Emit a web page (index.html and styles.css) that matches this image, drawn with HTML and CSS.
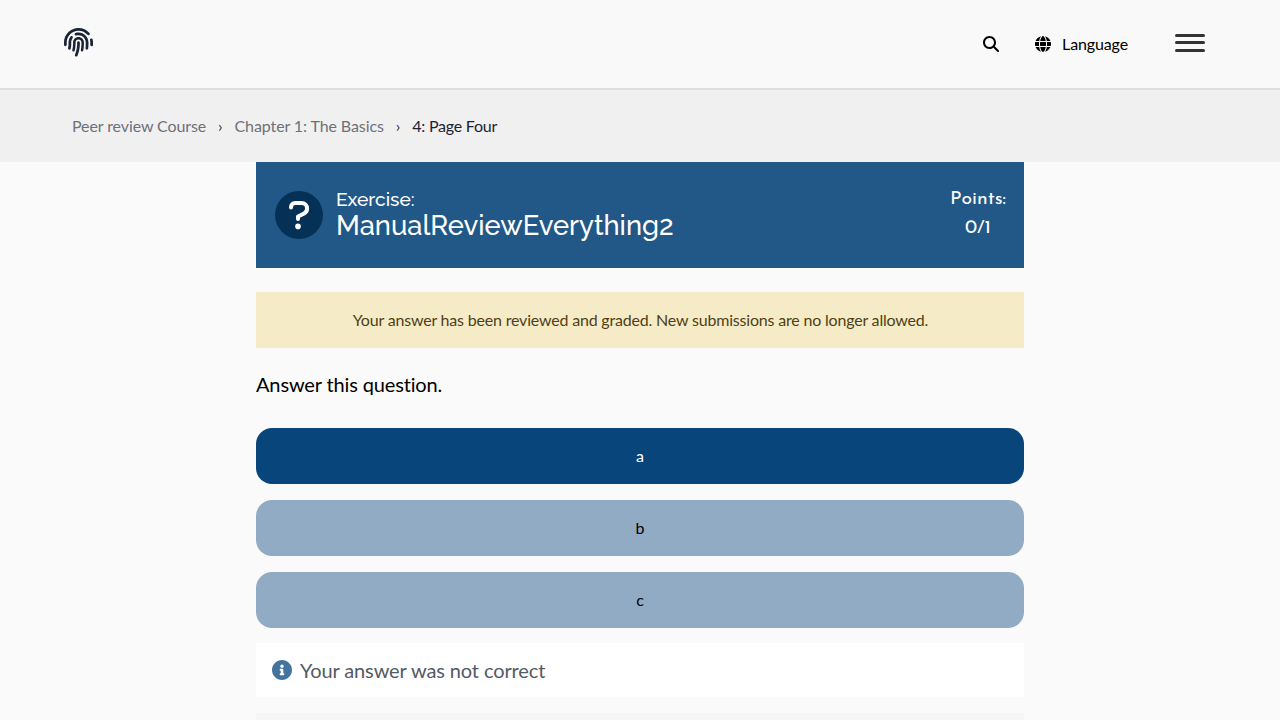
FILE: index.html
```html
<!DOCTYPE html>
<html lang="en">
<head>
<meta charset="utf-8">
<title>Page Four</title>
<link rel="stylesheet" href="styles.css">
</head>
<body>
<header class="topbar">
  <a class="logo"><svg viewBox="0 0 512 512" fill="currentColor"><path d="M48 256C48 141.1 141.1 48 256 48c63.1 0 119.6 28.1 157.8 72.5c8.6 10.1 23.8 11.2 33.8 2.6s11.2-23.8 2.6-33.8C403.3 34.6 333.7 0 256 0C114.6 0 0 114.6 0 256v40c0 13.3 10.7 24 24 24s24-10.7 24-24V256zm458.5-52.9c-2.7-13-15.5-21.3-28.4-18.5s-21.3 15.5-18.5 28.4c2.9 13.9 4.5 28.3 4.5 43.1v40c0 13.3 10.7 24 24 24s24-10.7 24-24V256c0-18.1-1.9-35.8-5.5-52.9zM256 80c-19 0-37.4 3-54.5 8.6c-15.2 5-18.7 23.7-8.3 35.9c7.1 8.3 18.8 10.8 29.4 7.9c10.6-2.9 21.8-4.4 33.4-4.4c70.7 0 128 57.3 128 128v24.9c0 25.2-1.5 50.3-4.4 75.3c-1.7 14.6 9.4 27.8 24.2 27.8c11.8 0 21.9-8.6 23.3-20.3c3.3-27.4 5-55 5-82.7V256c0-97.2-78.8-176-176-176zM150.7 148.7c-9.1-10.6-25.3-11.4-33.9-.4C93.7 178 80 215.4 80 256v24.9c0 24.2-2.6 48.4-7.8 71.9C68.8 368.4 80.1 384 96.1 384c10.5 0 19.9-7 22.2-17.3c6.4-28.1 9.7-56.8 9.7-85.8V256c0-27.2 8.5-52.4 22.9-73.1c7.2-10.4 8-24.6-.2-34.2zM256 160c-53 0-96 43-96 96v24.9c0 35.9-4.6 71.5-13.8 106.1c-3.8 14.3 6.7 29 21.5 29c9.5 0 17.9-6.2 20.4-15.4c10.5-39 15.9-79.2 15.9-119.7V256c0-28.7 23.3-52 52-52s52 23.3 52 52v24.9c0 36.3-3.5 72.4-10.4 107.9c-2.7 13.9 7.7 27.2 21.8 27.2c10.2 0 19-7 21-17c7.7-38.8 11.6-78.3 11.6-118.1V256c0-53-43-96-96-96zm24 96c0-13.3-10.7-24-24-24s-24 10.7-24 24v24.9c0 59.9-11 119.3-32.5 175.2l-5.9 15.3c-4.8 12.4 1.4 26.3 13.8 31s26.3-1.4 31-13.8l5.9-15.3C267.9 411.9 280 346.7 280 280.9V256z"/></svg></a>
  <nav class="tools">
    <svg class="icon search" viewBox="0 0 512 512"><path d="M416 208c0 45.9-14.9 88.3-40 122.7L502.6 457.4c12.5 12.5 12.5 32.8 0 45.3s-32.8 12.5-45.3 0L330.7 376c-34.4 25.2-76.8 40-122.7 40C93.1 416 0 322.9 0 208S93.1 0 208 0S416 93.1 416 208zM208 352a144 144 0 1 0 0-288 144 144 0 1 0 0 288z"/></svg>
    <svg class="icon globe" viewBox="0 0 512 512"><path d="M352 256c0 22.2-1.2 43.6-3.3 64H163.3c-2.2-20.4-3.3-41.8-3.3-64s1.2-43.6 3.3-64H348.7c2.2 20.4 3.3 41.8 3.3 64zm28.8-64H503.9c5.3 20.5 8.1 41.9 8.1 64s-2.8 43.5-8.1 64H380.8c2.1-20.6 3.2-42 3.2-64s-1.1-43.4-3.2-64zm112.6-32H376.7c-10-63.9-29.8-117.4-55.3-151.6c78.3 20.7 142 77.5 171.9 151.6zm-149.1 0H167.7c6.1-36.4 15.5-68.6 27-94.7c10.5-23.6 22.2-40.7 33.5-51.5C239.4 3.2 248.7 0 256 0s16.6 3.2 27.8 13.8c11.3 10.8 23 27.9 33.5 51.5c11.6 26 20.9 58.2 27 94.7zm-209 0H18.6C48.6 85.9 112.2 29.1 190.6 8.4C165.1 42.6 145.3 96.1 135.3 160zM8.1 192H131.2c-2.1 20.6-3.2 42-3.2 64s1.1 43.4 3.2 64H8.1C2.8 299.5 0 278.1 0 256s2.8-43.5 8.1-64zM194.7 446.6c-11.6-26-20.9-58.2-27-94.6H344.3c-6.1 36.4-15.5 68.6-27 94.6c-10.5 23.6-22.2 40.7-33.5 51.5C272.6 508.8 263.3 512 256 512s-16.6-3.2-27.8-13.8c-11.3-10.8-23-27.9-33.5-51.5zM135.3 352c10 63.9 29.8 117.4 55.3 151.6C112.2 482.9 48.6 426.1 18.6 352H135.3zm358.1 0c-30 74.1-93.6 130.9-171.9 151.6c25.5-34.2 45.2-87.7 55.3-151.6H493.4z"/></svg>
    <span class="language">Language</span>
    <div class="menu"><i></i><i></i><i></i></div>
  </nav>
</header>
<nav class="crumbs">
  <a>Peer review Course</a><span class="sep">›</span><a>Chapter 1: The Basics</a><span class="sep">›</span><a class="current">4: Page Four</a>
</nav>
<main class="content">
  <section class="exercise">
    <svg class="question" viewBox="0 0 48 48"><circle cx="24" cy="24" r="24" fill="#063157"/><path d="M16 16.6v-.4c0-2.4 1.8-4.2 4.2-4.2h6.3c3.3 0 5.6 2.4 5.6 5.5 0 2.2-1.1 3.9-3 4.9L23 25.6V28" fill="none" stroke="#fff" stroke-width="4" stroke-linecap="round" stroke-linejoin="round"/><circle cx="23" cy="35.4" r="2.8" fill="#fff"/></svg>
    <h2 class="heading"><span class="kind">Exercise:</span><span class="name">ManualReviewEverything2</span></h2>
    <div class="points"><span class="points-label">Points:</span><span class="points-value">0/1</span></div>
  </section>
  <div class="notice">Your answer has been reviewed and graded. New submissions are no longer allowed.</div>
  <p class="prompt">Answer this question.</p>
  <div class="options">
    <button class="option selected">a</button>
    <button class="option">b</button>
    <button class="option">c</button>
  </div>
  <div class="feedback">
    <svg class="info" viewBox="8 8 496 496"><path d="M256 8C119.043 8 8 119.083 8 256c0 136.997 111.043 248 248 248s248-111.003 248-248C504 119.083 392.957 8 256 8zm0 110c23.196 0 42 18.804 42 42s-18.804 42-42 42-42-18.804-42-42 18.804-42 42-42zm56 254c0 6.627-5.373 12-12 12h-88c-6.627 0-12-5.373-12-12v-24c0-6.627 5.373-12 12-12h12v-64h-12c-6.627 0-12-5.373-12-12v-24c0-6.627 5.373-12 12-12h64c6.627 0 12 5.373 12 12v100h12c6.627 0 12 5.373 12 12v24z"/></svg>
    <span>Your answer was not correct</span>
  </div>
  <div class="next-panel"></div>
</main>
</body>
</html>
```
FILE: styles.css
```css
* { box-sizing: border-box; }
body { margin: 0; height: 720px; overflow: hidden; background: #fafafa; color: #000; font-family: Lato, sans-serif; font-size: 16px; font-variant-ligatures: none; }
svg { display: block; flex: none; }
.topbar { height: 90px; padding: 0 75px 0 64px; display: flex; justify-content: space-between; background: #f9f9f9; border-bottom: 2px solid #dedede; }
.logo { padding-top: 28px; color: #1a2333; }
.logo svg { width: 29px; height: 29px; }
.tools { display: flex; align-items: center; }
.icon { width: 16px; height: 16px; }
.search { margin-right: 36px; }
.globe { margin-right: 11px; }
.language { line-height: 24px; letter-spacing: -0.12px; }
.menu { margin: 0 0 3px 47px; width: 30px; display: flex; flex-direction: column; gap: 4.5px; }
.menu i { height: 3px; border-radius: 2px; background: #333; }
.crumbs { height: 72px; padding: 0 72px; display: flex; align-items: center; background: #f0f0f0; color: #6e7078; line-height: 24px; letter-spacing: -0.1px; }
.sep { margin: 0 12px; color: #333; }
.current { color: #1a2333; letter-spacing: -0.22px; }
.content { width: 768px; margin: 0 auto; }
.exercise { height: 106px; padding: 0 18px 0 19px; display: flex; align-items: center; background: #215887; color: #fff; }
.question { width: 48px; height: 48px; margin-right: 13px; }
.heading { margin: 0 auto 0 0; font-family: Raleway, Lato, sans-serif; font-weight: 500; display: flex; flex-direction: column; white-space: nowrap; }
.kind { font-size: 19.2px; line-height: 20px; }
.name { font-size: 27.3px; line-height: 32px; }
.points { margin-top: -2px; display: flex; flex-direction: column; align-items: center; font-family: "Josefin Sans", Lato, sans-serif; font-size: 19.4px; line-height: 29px; }
.notice { margin-top: 24px; height: 56px; padding-left: 1px; line-height: 56px; text-align: center; background: #f5ecc7; color: #4f3f16; letter-spacing: -0.19px; }
.prompt { margin: 20px 0 27px; font-size: 20px; line-height: 33px; letter-spacing: -0.14px; }
.options { display: flex; flex-direction: column; gap: 16px; }
.option { height: 56px; padding: 0 0 2px; border: 0; border-radius: 16px; background: #92abc4; color: #000; font: 16px Lato, sans-serif; }
.selected { background: #08457a; color: #fff; }
.feedback { margin-top: 15px; height: 54px; padding: 0 16px; display: flex; align-items: center; gap: 8px; background: #fff; color: #535a66; font-size: 20px; letter-spacing: -0.11px; }
.info { width: 20px; height: 20px; fill: #44749d; }
.next-panel { margin-top: 16px; height: 7px; background: #f5f6f7; }
```
